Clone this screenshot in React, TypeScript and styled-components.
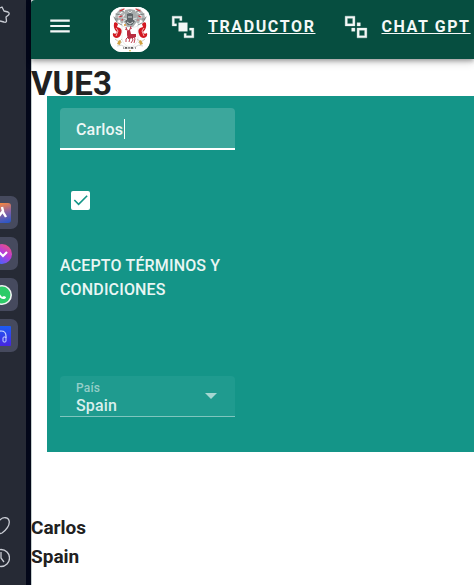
import React, { useState } from 'react';
import styled, { createGlobalStyle } from 'styled-components';

const GlobalStyle = createGlobalStyle`
  *, *::before, *::after { box-sizing: border-box; }
  body {
    margin: 0;
    overflow: hidden;
    background: #ffffff;
    color: #212121;
    font-family: Roboto, 'Liberation Sans', sans-serif;
  }
  h1, h2, p { margin: 0; }
`;

const Page = styled.div`
  display: flex;
  min-height: 100vh;
`;

const Sidebar = styled.aside`
  flex: 0 0 31px;
  display: flex;
  flex-direction: column;
  min-height: 100vh;
  padding: 4px 0 17px;
  overflow: hidden;
  background: #262a35;
  border-right: 5px solid #030719;
`;

const SideLink = styled.a`
  display: flex;
  width: 20px;
  height: 20px;
  margin-left: -10px;
  color: #c9ccd4;
`;

const Shortcuts = styled.nav`
  display: flex;
  flex-direction: column;
  gap: 8px;
  margin-top: 172px;
`;

const Shortcut = styled.a`
  display: flex;
  align-items: center;
  justify-content: flex-end;
  width: 34px;
  height: 33px;
  margin-left: -16px;
  padding-right: 6px;
  border-radius: 7px;
  background: #464a5e;
`;

const SideFooter = styled.div`
  display: flex;
  flex-direction: column;
  gap: 12px;
  margin-top: auto;
`;

const Content = styled.main`
  flex: 1;
  min-width: 0;
  border-left: 1px solid #c5cfce;
`;

const AppBar = styled.header`
  display: flex;
  align-items: center;
  height: 59px;
  margin-left: -1px;
  padding: 0 0 0 16px;
  background: #064e40;
  color: #f4f8f7;
  border-top-left-radius: 4px;
  box-shadow: 0 2px 4px rgba(0, 0, 0, 0.3), 0 4px 8px rgba(0, 0, 0, 0.14);
`;

const MenuButton = styled.button`
  display: flex;
  padding: 0;
  margin: 0 37px 8px 0;
  border: 0;
  background: none;
  color: inherit;
`;

const Crest = styled.svg`
  flex: none;
  width: 40px;
  height: 45px;
  border-radius: 12px;
  margin-right: 20px;
  background: #ffffff;
`;

const Nav = styled.nav`
  display: flex;
  gap: 28px;
  padding-bottom: 6px;
`;

const NavLink = styled.a`
  display: flex;
  align-items: center;
  gap: 12px;
  color: inherit;
  font-size: 16px;
  font-weight: 700;
  line-height: 24px;
  letter-spacing: 0.1em;
  white-space: nowrap;
  text-decoration: none;
  span { text-decoration: underline; }
`;

const Title = styled.h1`
  height: 37px;
  margin-left: -1px;
  font-size: 33px;
  font-weight: 700;
  line-height: 50px;
`;

const Panel = styled.form`
  position: relative;
  margin-left: 15px;
  padding: 12px 13px 35px;
  background: #149588;
  color: #e9f6f4;
  letter-spacing: 0.01em;
`;

const Column = styled.div`
  display: flex;
  flex-direction: column;
  width: 175px;
`;

const NameField = styled.div`
  position: relative;
  height: 42px;
`;

const NameInput = styled.input`
  width: 100%;
  height: 100%;
  padding: 2px 16px 0;
  border: 0;
  border-bottom: 2px solid #ffffff;
  border-radius: 4px 4px 0 0;
  outline: 0;
  background: #3ca79c;
  color: #edf7f6;
  font-family: inherit;
  font-size: 16px;
  font-weight: 500;
  letter-spacing: inherit;
`;

const Caret = styled.span`
  position: absolute;
  top: 11px;
  left: 64px;
  width: 1px;
  height: 20px;
  background: #ffffff;
`;

const CheckField = styled.div`
  position: relative;
  display: flex;
  width: 19px;
  height: 19px;
  margin: 41px 0 44px 11px;
  svg {
    position: absolute;
    inset: 0;
    pointer-events: none;
  }
`;

const CheckInput = styled.input`
  appearance: none;
  width: 100%;
  height: 100%;
  margin: 0;
  border: 2px solid #ffffff;
  border-radius: 2px;
  &:checked { background: #ffffff; }
`;

const Terms = styled.label`
  height: 122px;
  font-size: 16px;
  font-weight: 500;
  line-height: 24px;
`;

const SelectField = styled.div`
  position: relative;
  height: 41px;
  svg {
    position: absolute;
    top: 17px;
    right: 18px;
    pointer-events: none;
  }
`;

const SelectLabel = styled.label`
  position: absolute;
  top: 4px;
  left: 16px;
  color: #94cec8;
  font-size: 12px;
  font-weight: 500;
  line-height: 16px;
`;

const CountrySelect = styled.select`
  appearance: none;
  width: 100%;
  height: 100%;
  padding: 18px 32px 0 16px;
  border: 0;
  border-bottom: 1px solid #7fc5be;
  border-radius: 4px 4px 0 0;
  outline: 0;
  background: #1f9b8f;
  color: #d8efec;
  font-family: inherit;
  font-size: 16px;
  font-weight: 500;
  letter-spacing: inherit;
  option { color: #212121; }
`;

const Results = styled.section`
  margin-left: -1px;
  padding-top: 61px;
`;

const Result = styled.h2`
  min-height: 29px;
  font-size: 19px;
  font-weight: 700;
  line-height: 29px;
`;

const MenuIcon = () => (
  <svg width="26" height="26" viewBox="0 0 24 24" fill="currentColor" aria-hidden="true">
    <path d="M3 6h18v2H3V6m0 5h18v2H3V11m0 5h18v2H3V16z" />
  </svg>
);

const FrontIcon = () => (
  <svg width="26" height="26" viewBox="0 0 24 24" fill="currentColor" stroke="currentColor" strokeWidth="0.3" aria-hidden="true">
    <path d="M2 2H11V6H9V4H4V9H6V11H2V2M22 13V22H13V18H15V20H20V15H18V13H22M8 8V16H16V8H8Z" />
  </svg>
);

const BackIcon = () => (
  <svg width="26" height="26" viewBox="0 0 24 24" fill="currentColor" stroke="currentColor" strokeWidth="0.3" aria-hidden="true">
    <path d="M2 2H11V11H2V2M9 4H4V9H9V4M22 13V22H13V13H22M15 20H20V15H15V20M16 8V11H13V8H16M11 16H8V13H11V16Z" />
  </svg>
);

const CrestLogo = () => (
  <Crest viewBox="0 0 40 45" role="img" aria-label="Escudo">
    <rect width="40" height="45" fill="#fff" />
    <g fill="none" strokeLinecap="round">
      <path d="M12 3Q5 7 7 13M28 3Q35 7 33 13M14 6Q9 9 12 15M26 6Q31 9 28 15" stroke="#b4b8b8" strokeWidth="3" />
      <path d="M14 5l-4-2M11 8L6 7M10 12L5 12M26 5l4-2M29 8l5-1M30 12l5 0M8 16l4 2M32 16l-4 2M4 10l3 5M36 10l-3 5" stroke="#777c7c" strokeWidth="0.9" />
      <path d="M10 4l4-2M30 4l-4-2M9 10l3-1M31 10l-3-1M12 13l2-2M28 13l-2-2" stroke="#cf3138" strokeWidth="1.2" />
    </g>
    <path d="M15 3l5-1 5 1 1 4 3 3-3 6-3 4h-6l-3-5-2-4 3-3z" fill="#a7acac" />
    <path d="M17 7l3-1 3 1v4l2 3-3 4h-4l-3-4 2-3z" fill="#5e6568" />
    <path d="M13 11l4 1-3 2m13-3l-4 1 3 2M18 4l2 2 2-2M17 15l3 2 3-2M18 10h4" stroke="#e2e5e5" fill="none" strokeWidth="0.9" />
    <circle cx="15" cy="18" r="1" fill="#d8902c" />
    <g fill="#d31921">
      <path d="M4 16q2-2 4 1l-1 3 3 1q3 2 1 6-1 4-5 4-4-1-3-5 3 2 4-1-4-3-3-9z" />
      <path d="M36 16q-2-2-4 1l1 3-3 1q-3 2-1 6 1 4 5 4 4-1 3-5-3 2-4-1 4-3 3-9z" />
    </g>
    <path d="M6 21l2 3-2 5M34 21l-2 3 2 5" fill="none" stroke="#f2c7c9" strokeWidth="0.9" />
    <path d="M12 19q4 2 8 1 4 1 8-1v13q-1 6-8 8-7-2-8-8z" fill="#fff" stroke="#d5d8d8" strokeWidth="0.5" />
    <g fill="none" stroke="#b92c40" strokeWidth="0.9">
      <path d="M16 20l1 3 2 1M21 19l-1 3-1 2M15 22l2 1M22 21l-2 1" />
      <path d="M18 30l-2 2v3M20 31l-1 4M24 30l1 2-1 4M22 30l1 3-2 3" />
    </g>
    <path d="M17 24l3-1 1 4 5 0 0 3-3 1-5 1-1-4z" fill="#b92c40" />
    <path d="M5 32l4 3 3-3M35 32l-4 3-4-3M8 37l4-2M32 37l-4-2" fill="none" stroke="#c2baa9" strokeWidth="0.8" />
    <path d="M9 33l2 1-1 4-3-1zM31 33l-2 1 1 4 3-1z" fill="#d1a242" />
    <path d="M7 39q5-2 8 1 5 1 10 0 3-3 8-1" fill="none" stroke="#c6c6c6" strokeWidth="0.8" />
    <path d="M13 41h1m1 1l1-2 1 2m2 0v-2m2 2l1-2 1 2m2-1h1" fill="none" stroke="#343434" strokeWidth="0.9" />
    <path d="M19 43l1 2 1-2z" fill="#d6b43c" />
  </Crest>
);

const StarIcon = () => (
  <svg width="20" height="20" viewBox="0 0 20 20" fill="none" stroke="currentColor" strokeWidth="1.3" strokeLinejoin="round" aria-hidden="true">
    <path d="M10 4L12 3L14 7L18 8Q20 9 18.5 11L16 13L16.5 17Q16 19 14 18L10 17" />
  </svg>
);

const HeartIcon = () => (
  <svg width="20" height="20" viewBox="0 0 20 20" fill="none" stroke="currentColor" strokeWidth="1.3" aria-hidden="true">
    <path d="M9 5C6 0 0 1 0 6C0 10 4 14 8 17q2 1 4 0C16 14 19.3 10 19.3 6C19 1 13 0 9 5z" />
  </svg>
);

const ClockIcon = () => (
  <svg width="20" height="20" viewBox="0 0 20 20" fill="none" stroke="currentColor" strokeWidth="1.3" aria-hidden="true">
    <circle cx="11" cy="10" r="8.5" />
    <path d="M11 4v6l3 4" />
  </svg>
);

const AppIcon = () => (
  <svg width="22" height="22" viewBox="0 0 22 22" aria-hidden="true">
    <defs>
      <linearGradient id="app-fill" x1="0.6" y1="0" x2="0.9" y2="1">
        <stop stopColor="#f48643" />
        <stop offset="0.45" stopColor="#8c62a0" />
        <stop offset="1" stopColor="#2456c9" />
      </linearGradient>
    </defs>
    <rect y="1" width="21" height="20" rx="3" fill="url(#app-fill)" />
    <path d="M12 5L13 9L9 14M13 10l3 5" fill="none" stroke="#fff" strokeWidth="2.4" />
  </svg>
);

const MessengerIcon = () => (
  <svg width="22" height="22" viewBox="0 0 22 22" aria-hidden="true">
    <defs>
      <linearGradient id="chat-fill" x1="1" y1="0" x2="0.3" y2="1">
        <stop stopColor="#fb5966" />
        <stop offset="0.5" stopColor="#b63cda" />
        <stop offset="1" stopColor="#3d65ff" />
      </linearGradient>
    </defs>
    <circle cx="12" cy="11" r="10" fill="url(#chat-fill)" />
    <path d="M7 10l2-1 4 4 4-4" fill="none" stroke="#fff" strokeWidth="2.2" />
  </svg>
);

const PhoneIcon = () => (
  <svg width="22" height="22" viewBox="0 0 22 22" aria-hidden="true">
    <circle cx="12" cy="11" r="9.2" fill="#2dcb68" stroke="#f1f3f3" strokeWidth="1.6" />
    <path d="M7 9q2 5 6 6 3 0 3-2l-2-1-2 1-4-5" fill="#fff" />
  </svg>
);

const HeadphonesIcon = () => (
  <svg width="22" height="22" viewBox="0 0 22 22" aria-hidden="true">
    <defs>
      <linearGradient id="music-fill" x1="0.8" y1="0" x2="0.8" y2="1">
        <stop stopColor="#1c5cf5" />
        <stop offset="1" stopColor="#4725df" />
      </linearGradient>
    </defs>
    <rect y="1" width="21" height="20" rx="1" fill="url(#music-fill)" />
    <path d="M6 16V11q0-5 5-5 5 0 5 5v2" fill="none" stroke="#c9d6ff" strokeWidth="1.2" />
    <rect x="13" y="12" width="3" height="5" rx="1" fill="none" stroke="#c9d6ff" />
  </svg>
);

const shortcuts = [
  { name: 'Aplicaciones', Icon: AppIcon },
  { name: 'Messenger', Icon: MessengerIcon },
  { name: 'WhatsApp', Icon: PhoneIcon },
  { name: 'Reproductor', Icon: HeadphonesIcon },
];

export default function App() {
  const [name, setName] = useState('Carlos');
  const [accepted, setAccepted] = useState(true);
  const [country, setCountry] = useState('Spain');

  return (
    <>
      <GlobalStyle />
      <Page>
        <Sidebar>
          <SideLink href="#favoritos" aria-label="Favoritos"><StarIcon /></SideLink>
          <Shortcuts>
            {shortcuts.map(({ name: label, Icon }) => (
              <Shortcut key={label} href="#app" aria-label={label}><Icon /></Shortcut>
            ))}
          </Shortcuts>
          <SideFooter>
            <SideLink href="#guardados" aria-label="Guardados"><HeartIcon /></SideLink>
            <SideLink href="#historial" aria-label="Historial"><ClockIcon /></SideLink>
          </SideFooter>
        </Sidebar>
        <Content>
          <AppBar>
            <MenuButton type="button" aria-label="Menú"><MenuIcon /></MenuButton>
            <CrestLogo />
            <Nav>
              <NavLink href="#traductor"><FrontIcon /><span>TRADUCTOR</span></NavLink>
              <NavLink href="#chat"><BackIcon /><span>CHAT GPT</span></NavLink>
            </Nav>
          </AppBar>
          <Title>VUE3</Title>
          <Panel>
            <Column>
              <NameField>
                <NameInput aria-label="Nombre" value={name} onChange={(e) => setName(e.target.value)} />
                <Caret />
              </NameField>
              <CheckField>
                <CheckInput id="terms" type="checkbox" checked={accepted} onChange={(e) => setAccepted(e.target.checked)} />
                {accepted && (
                  <svg width="19" height="19" viewBox="0 0 20 20" fill="none" stroke="#149588" strokeWidth="1.7" aria-hidden="true">
                    <path d="M3.5 9.5L8 14l9-9" />
                  </svg>
                )}
              </CheckField>
              <Terms htmlFor="terms">ACEPTO TÉRMINOS Y CONDICIONES</Terms>
              <SelectField>
                <CountrySelect id="country" value={country} onChange={(e) => setCountry(e.target.value)}>
                  <option>Spain</option>
                </CountrySelect>
                <SelectLabel htmlFor="country">País</SelectLabel>
                <svg width="12" height="6" viewBox="0 0 12 6" fill="#a5d7d2" aria-hidden="true">
                  <path d="M0 0h12L6 6z" />
                </svg>
              </SelectField>
            </Column>
          </Panel>
          <Results>
            <Result>{name}</Result>
            <Result>{country}</Result>
          </Results>
        </Content>
      </Page>
    </>
  );
}
